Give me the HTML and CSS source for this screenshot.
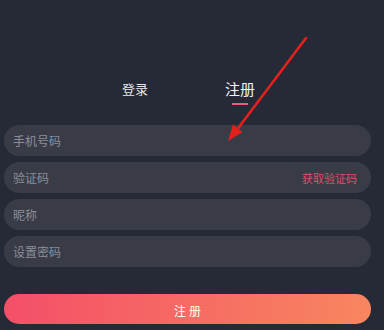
FILE: index.html
```html
<!DOCTYPE html>
<html lang="zh">
<head>
<meta charset="utf-8">
<link rel="stylesheet" href="styles.css">
</head>
<body>
<div class="page">
  <div class="tabs">
    <div class="tab">登录</div>
    <div class="tab active">注册</div>
  </div>
  <form class="form">
    <div class="field"><input class="input" placeholder="手机号码"></div>
    <div class="field"><input class="input" placeholder="验证码"><span class="code">获取验证码</span></div>
    <div class="field"><input class="input" placeholder="昵称"></div>
    <div class="field"><input class="input" placeholder="设置密码"></div>
    <button class="submit" type="button">注册</button>
  </form>
</div>
<svg class="arrow" width="384" height="330" viewBox="0 0 384 330">
  <line x1="306" y1="38" x2="236" y2="131" stroke="#e3201c" stroke-width="2.6" stroke-linecap="round"/>
  <polygon points="228,141 242.5,131.9 232.9,124.6" fill="#e3201c"/>
</svg>
</body>
</html>
```
FILE: styles.css
```css
html, body {
  margin: 0;
  padding: 0;
  background: #262a36;
}
body {
  width: 384px;
  height: 330px;
  overflow: hidden;
  position: relative;
  font-family: "Noto Sans CJK SC", "Noto Sans", sans-serif;
}
.page {
  padding: 0 13px 0 4px;
}
.tabs {
  margin-top: 79px;
  display: flex;
  justify-content: center;
}
.tab {
  width: 105px;
  display: flex;
  flex-direction: column;
  align-items: center;
  font-size: 13px;
  line-height: 20px;
  color: #e6e7ea;
}
.tab.active {
  font-size: 15px;
  color: #f2f3f5;
}
.tab.active::after {
  content: "";
  width: 16px;
  height: 2px;
  margin-top: 4px;
  background: #e0607a;
}
.tabs .tab:first-child {
  padding-bottom: 6px;
}
.form {
  margin: 20px 0 0;
  display: flex;
  flex-direction: column;
  gap: 6px;
}
.field {
  height: 31px;
  border-radius: 16px;
  background: #393c47;
  display: flex;
  align-items: center;
  padding: 0 14px 0 9px;
}
.input {
  flex: 1;
  min-width: 0;
  border: 0;
  outline: 0;
  background: transparent;
  padding: 0;
  font-family: inherit;
  font-size: 12px;
  color: #d0d2d8;
}
.input::placeholder {
  color: #8b8e98;
}
.code {
  font-size: 11px;
  color: #d9506a;
}
.submit {
  margin-top: 21px;
  height: 30px;
  border: 0;
  border-radius: 15px;
  background: linear-gradient(90deg, #f44f68 0%, #f8865f 100%);
  color: #fff;
  font-family: inherit;
  font-size: 12px;
  letter-spacing: 3px;
  padding: 3px 0 0 3px;
}
.arrow {
  position: absolute;
  left: 0;
  top: 0;
  pointer-events: none;
}
```
